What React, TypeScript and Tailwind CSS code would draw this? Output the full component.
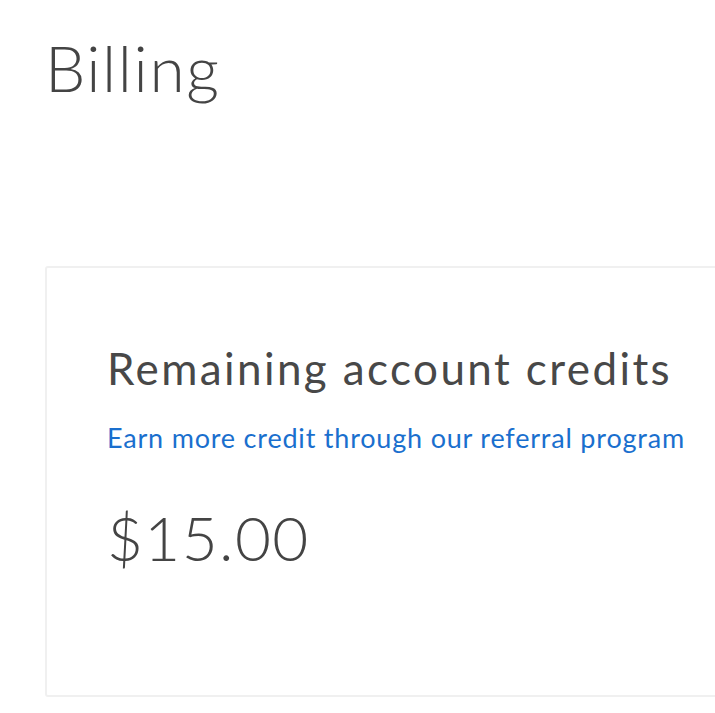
export default function App() {
  return (
    <div
      className="h-[713px] w-[715px] overflow-hidden bg-white text-[#444444]"
      style={{ fontFamily: 'Lato, "Open Sans", sans-serif' }}
    >
      <div className="pl-[45px] pt-[28px]">
        <h1 className="text-[64px] font-light leading-[80px] tracking-[1.6px]">Billing</h1>

        <div className="mt-[158px] h-[431px] w-[720px] rounded-[3px] border-2 border-[#f0f0f0] pl-[60px] pt-[72px]">
          <h2 className="text-[44px] font-normal leading-[56px] tracking-[2.4px] text-[#484848]">
            Remaining account credits
          </h2>
          <a href="#" className="mt-[24px] block text-[27px] leading-[36px] tracking-[0.8px] text-[#1a6fce]">
            Earn more credit through our referral program
          </a>
          <div className="mt-[45px] text-[62px] font-light leading-[72px] tracking-[1.4px]">$15.00</div>
        </div>
      </div>
    </div>
  );
}
